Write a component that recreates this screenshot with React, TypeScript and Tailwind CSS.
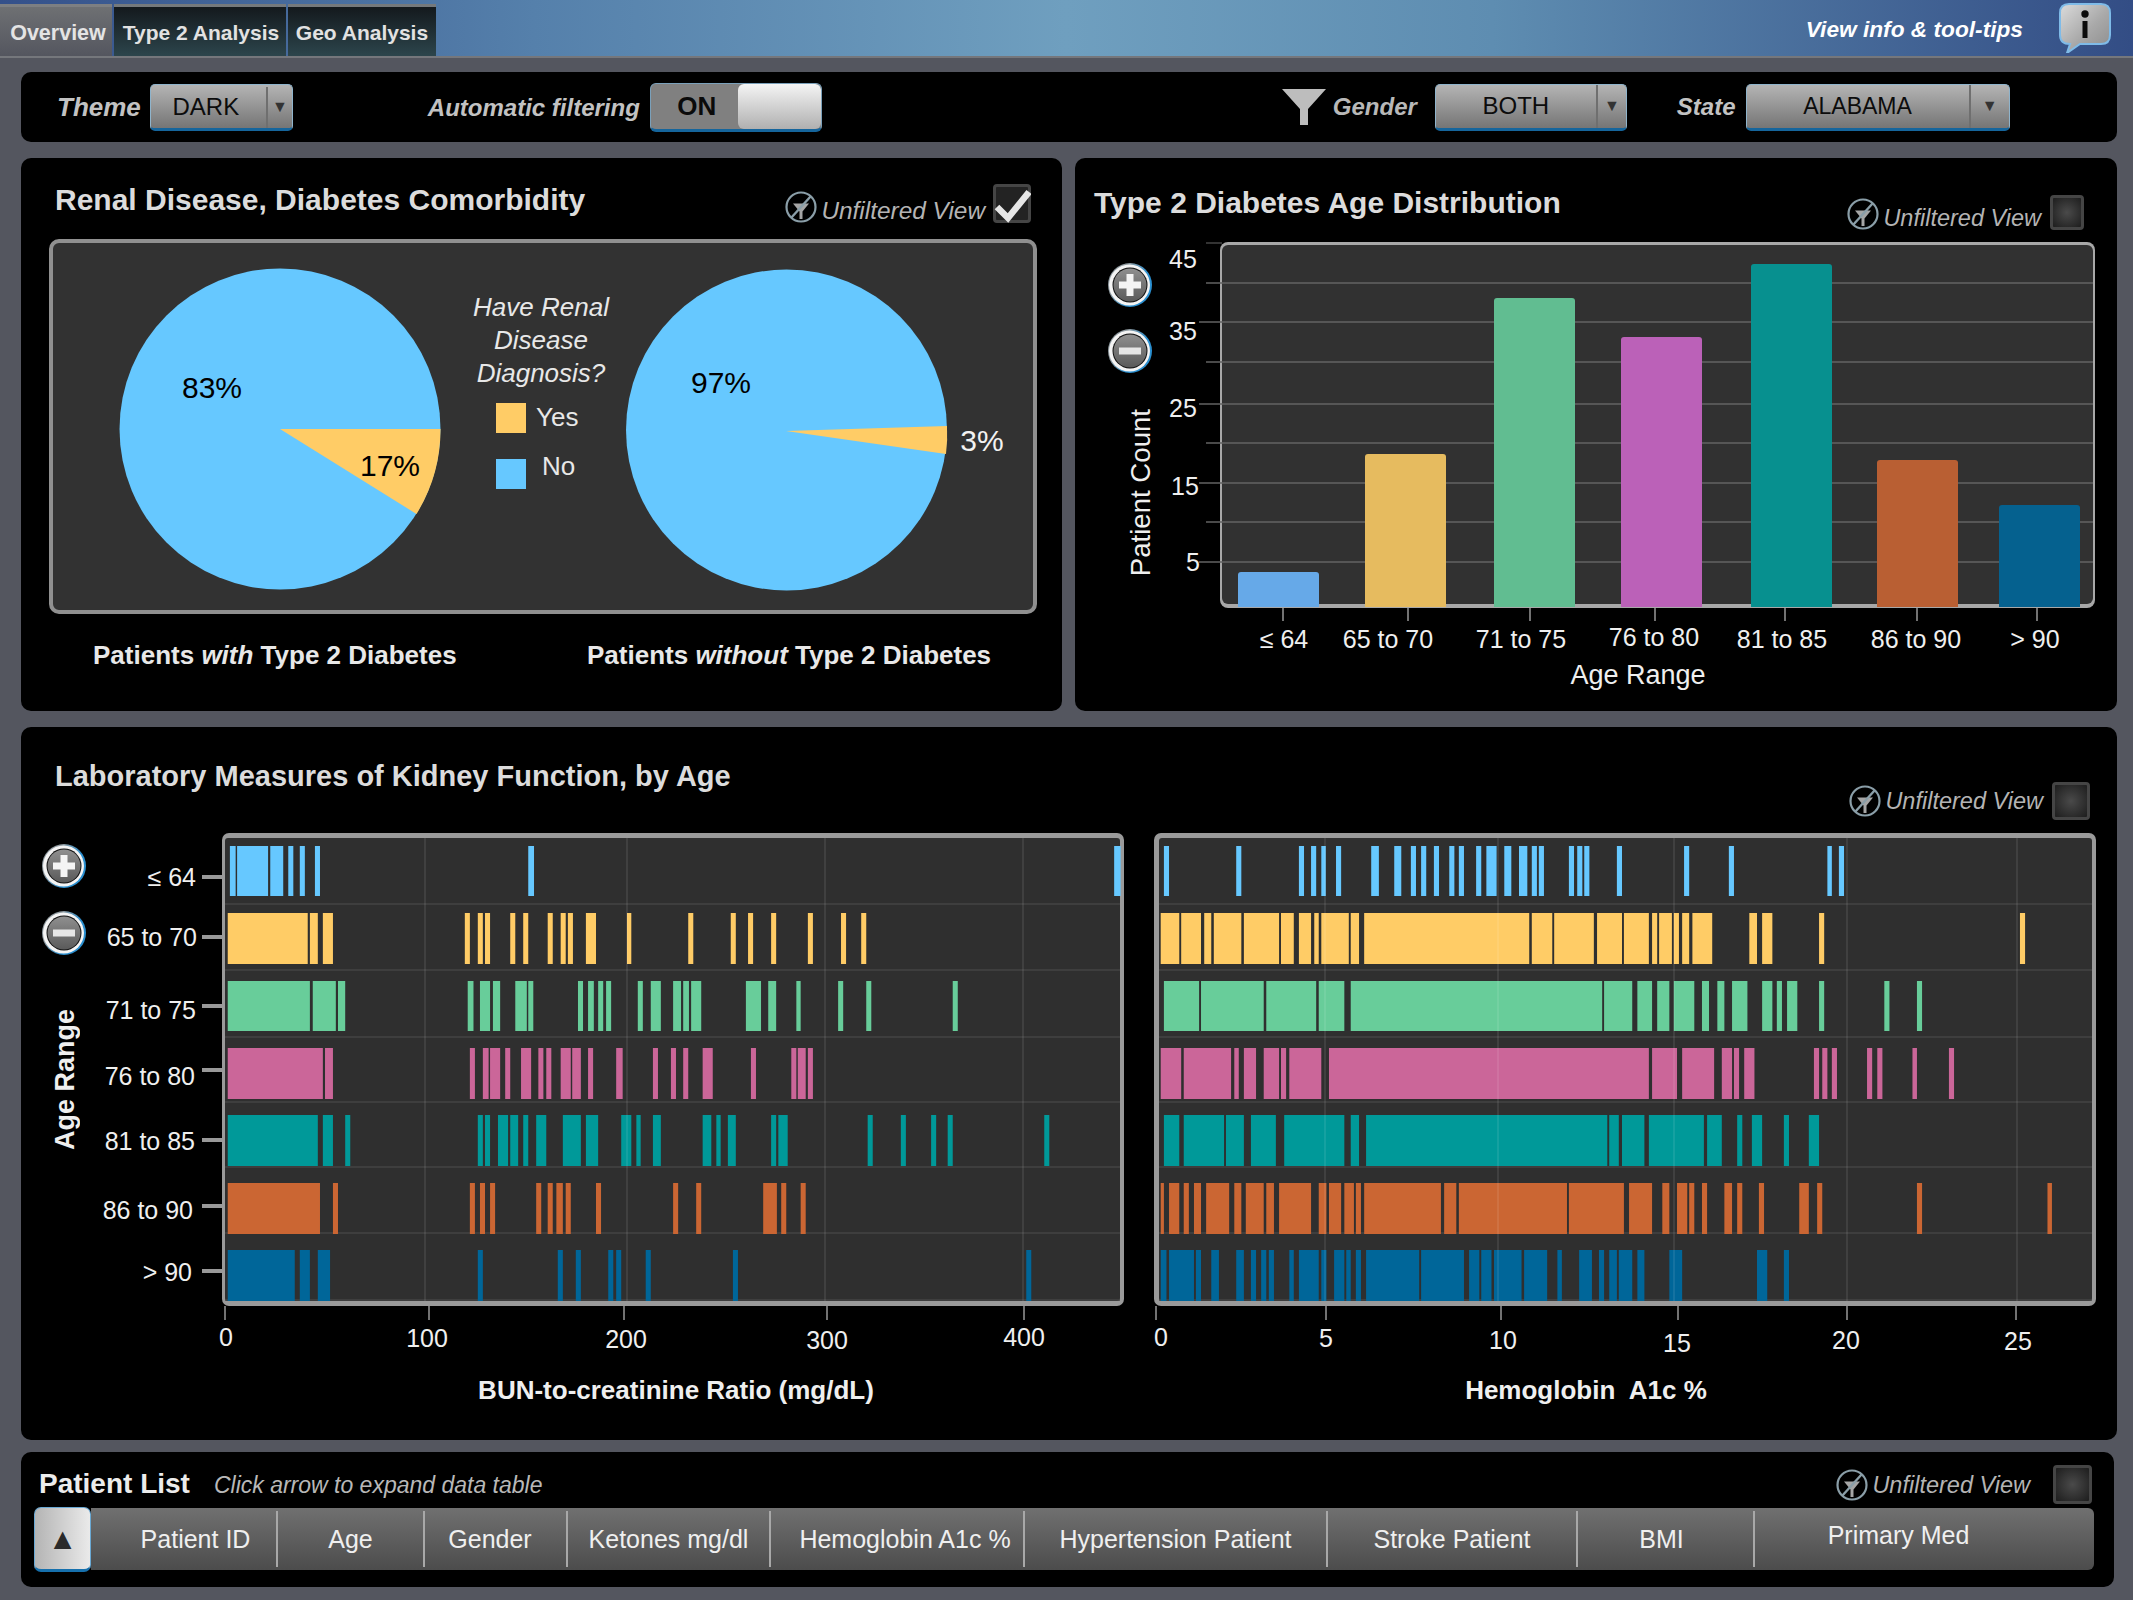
import type { ReactNode } from "react";

type Span = [number, number];

interface StripRow {
  color: string;
  top: number;
  height: number;
  spans: Span[];
}

// spans are read off the zoomed reference, so each plot carries its own scale
const LEFT_SCALE = 1.3876;
const RIGHT_SCALE = 1.563;
const PLOT_X = 1130;

const rowBands: { color: string; top: number; height: number }[] = [
  { color: "#66c8ff", top: 846, height: 50 },
  { color: "#ffcc66", top: 913, height: 51 },
  { color: "#68cd9a", top: 981, height: 50 },
  { color: "#cb6699", top: 1048, height: 51 },
  { color: "#009999", top: 1115, height: 51 },
  { color: "#cb6633", top: 1183, height: 51 },
  { color: "#006699", top: 1250, height: 51 },
];

const rowLines = [904, 970, 1037, 1102, 1167, 1233, 1300];

const bunSpans: Span[][] = [
  [[319, 327], [329, 372], [375, 393], [400, 407], [416, 423], [437, 444], [733, 741], [1546, 1555]],
  [[316, 427], [430, 441], [448, 462], [645, 652], [663, 670], [673, 680], [708, 715], [726, 733], [760, 767], [778, 785], [788, 795], [813, 827], [870, 876], [955, 962], [1014, 1021], [1038, 1045], [1070, 1077], [1121, 1128], [1167, 1174], [1195, 1202]],
  [[316, 430], [434, 466], [469, 479], [649, 657], [666, 680], [684, 694], [715, 731], [733, 740], [802, 809], [816, 824], [830, 837], [841, 848], [885, 892], [903, 917], [934, 945], [948, 956], [959, 973], [1035, 1056], [1066, 1077], [1105, 1111], [1163, 1170], [1202, 1209], [1322, 1329]],
  [[316, 448], [451, 462], [652, 659], [670, 678], [680, 694], [701, 708], [723, 737], [747, 754], [758, 765], [778, 792], [794, 806], [816, 823], [855, 864], [906, 913], [931, 938], [948, 955], [975, 989], [1042, 1049], [1098, 1105], [1107, 1118], [1121, 1128]],
  [[316, 441], [448, 462], [479, 486], [663, 670], [673, 680], [691, 705], [708, 719], [726, 733], [744, 758], [781, 806], [813, 830], [862, 876], [883, 889], [906, 917], [975, 987], [994, 1000], [1010, 1021], [1070, 1077], [1080, 1093], [1204, 1211], [1250, 1257], [1292, 1299], [1315, 1322], [1449, 1456]],
  [[316, 444], [462, 469], [652, 659], [666, 673], [680, 687], [744, 751], [760, 767], [772, 781], [785, 792], [827, 834], [934, 941], [966, 973], [1059, 1078], [1084, 1091], [1111, 1118]],
  [[316, 409], [416, 430], [441, 458], [663, 670], [774, 781], [799, 806], [844, 851], [855, 862], [896, 903], [1017, 1024], [1424, 1431]],
];

const a1cSpans: Span[][] = [
  [[53, 61], [166, 174], [264, 272], [283, 291], [299, 306], [322, 330], [377, 389], [413, 424], [439, 447], [455, 463], [475, 483], [499, 507], [514, 522], [541, 549], [557, 573], [585, 596], [608, 621], [628, 636], [639, 647], [686, 694], [699, 707], [710, 718], [761, 769], [866, 874], [936, 944], [1090, 1097], [1108, 1116]],
  [[48, 77], [80, 111], [116, 127], [131, 174], [178, 233], [236, 256], [264, 283], [288, 295], [299, 342], [345, 358], [366, 624], [628, 660], [663, 725], [730, 769], [772, 811], [816, 824], [827, 847], [850, 858], [863, 874], [879, 910], [968, 980], [988, 1004], [1077, 1085], [1391, 1399]],
  [[53, 108], [111, 209], [213, 291], [295, 335], [345, 738], [741, 785], [793, 816], [824, 843], [850, 882], [894, 905], [918, 929], [941, 965], [988, 1004], [1011, 1019], [1027, 1043], [1077, 1085], [1179, 1187], [1230, 1238]],
  [[48, 80], [84, 158], [163, 170], [178, 197], [209, 233], [236, 244], [249, 299], [311, 811], [816, 855], [863, 913], [925, 941], [944, 952], [960, 976], [1069, 1077], [1082, 1090], [1097, 1105], [1152, 1160], [1168, 1176], [1223, 1230], [1280, 1288]],
  [[53, 77], [84, 147], [150, 178], [189, 228], [241, 335], [345, 358], [369, 746], [749, 764], [769, 804], [811, 897], [902, 925], [949, 957], [972, 988], [1022, 1030], [1061, 1077]],
  [[48, 53], [61, 77], [84, 92], [100, 111], [119, 155], [163, 174], [181, 209], [213, 225], [233, 283], [295, 307], [311, 330], [335, 350], [353, 361], [366, 486], [491, 510], [514, 683], [686, 772], [780, 816], [832, 843], [855, 871], [874, 882], [894, 902], [929, 941], [949, 957], [983, 991], [1046, 1061], [1074, 1082], [1230, 1238], [1434, 1441]],
  [[48, 57], [61, 100], [103, 111], [127, 139], [166, 178], [189, 197], [205, 213], [217, 225], [249, 256], [264, 295], [299, 307], [319, 335], [338, 345], [353, 361], [369, 452], [455, 522], [530, 546], [549, 565], [569, 612], [616, 652], [668, 675], [702, 722], [733, 741], [749, 761], [764, 785], [793, 804], [843, 863], [980, 996], [1022, 1030]],
];

const bunRows: StripRow[] = rowBands.map((band, i) => ({ ...band, spans: bunSpans[i] }));
const a1cRows: StripRow[] = rowBands.map((band, i) => ({ ...band, spans: a1cSpans[i] }));

const stripAgeLabels = [
  { label: "≤ 64", right: 196, textY: 877, tickY: 877 },
  { label: "65 to 70", right: 197, textY: 937, tickY: 937 },
  { label: "71 to 75", right: 196, textY: 1010, tickY: 1006 },
  { label: "76 to 80", right: 195, textY: 1076, tickY: 1070 },
  { label: "81 to 85", right: 195, textY: 1141, tickY: 1140 },
  { label: "86 to 90", right: 193, textY: 1210, tickY: 1206 },
  { label: "> 90", right: 192, textY: 1272, tickY: 1271 },
];

const ageBars = [
  { x: 1238, top: 572, color: "#66a9e8", tick: 1283, label: "≤ 64", labelX: 1284, labelY: 639 },
  { x: 1365, top: 454, color: "#e6bb5f", tick: 1408, label: "65 to 70", labelX: 1388, labelY: 639 },
  { x: 1494, top: 298, color: "#61bd91", tick: 1530, label: "71 to 75", labelX: 1521, labelY: 639 },
  { x: 1621, top: 337, color: "#bb61b8", tick: 1655, label: "76 to 80", labelX: 1654, labelY: 637 },
  { x: 1751, top: 264, color: "#07908f", tick: 1785, label: "81 to 85", labelX: 1782, labelY: 639 },
  { x: 1877, top: 460, color: "#b95f33", tick: 1917, label: "86 to 90", labelX: 1916, labelY: 639 },
  { x: 1999, top: 505, color: "#05618f", tick: 2037, label: "> 90", labelX: 2035, labelY: 639 },
];

const patientColumns = [
  { label: "Patient ID", width: 187, inset: "pl-[24px]" },
  { label: "Age", width: 147, inset: "" },
  { label: "Gender", width: 143, inset: "pr-[11px]" },
  { label: "Ketones mg/dl", width: 203, inset: "" },
  { label: "Hemoglobin A1c %", width: 254, inset: "pl-[16px]" },
  { label: "Hypertension Patient", width: 303, inset: "" },
  { label: "Stroke Patient", width: 250, inset: "" },
  { label: "BMI", width: 177, inset: "pr-[8px]" },
];

function FilterBadge() {
  return (
    <svg width="32" height="32" viewBox="0 0 32 32" className="shrink-0">
      <circle cx="16" cy="16" r="14.5" fill="none" stroke="#8a9ea8" strokeWidth="2.2" />
      <path d="M8 12.5h16l-6.5 8V28h-3v-7.5z" fill="#a5a5a5" />
      <path d="M6 27L26 5" stroke="#8a9ea8" strokeWidth="2.4" />
    </svg>
  );
}

function CheckBox({ checked = false, size = "w-[38px] h-[39px]" }: { checked?: boolean; size?: string }) {
  return (
    <div
      className={`relative shrink-0 rounded-[4px] border-[3px] border-[#454545] ${
        checked ? "bg-[#232323]" : "bg-[radial-gradient(circle,#4a4a4a,#1d1d1d)]"
      } ${size}`}
    >
      {checked ? (
        <svg viewBox="0 0 38 39" className="absolute -left-[3px] -top-[3px] h-[39px] w-[38px]">
          <path d="M4 23l11 11L36 8" fill="none" stroke="#e6e6e6" strokeWidth="6.5" />
        </svg>
      ) : null}
    </div>
  );
}

function UnfilteredView({
  checked,
  boxSize,
  gap = "ml-[8px]",
  textSize = "text-[23.5px]",
  className = "",
}: {
  checked?: boolean;
  boxSize?: string;
  gap?: string;
  textSize?: string;
  className?: string;
}) {
  return (
    <div className={`flex self-start ${className}`}>
      <FilterBadge />
      <span className={`ml-[4px] italic leading-[24px] text-[#b4b4b4] ${textSize}`}>Unfiltered View</span>
      <div className={gap}>
        <CheckBox checked={checked} size={boxSize} />
      </div>
    </div>
  );
}

function ZoomButton({ kind }: { kind: "plus" | "minus" }) {
  return (
    <button type="button" className="block h-[46px] w-[46px]">
      <svg width="46" height="46" viewBox="0 0 46 46">
        <defs>
          <linearGradient id="zoomFace" x1="0" y1="0" x2="0" y2="1">
            <stop offset="0" stopColor="#8f8f8f" />
            <stop offset="1" stopColor="#5a5a5a" />
          </linearGradient>
          <linearGradient id="zoomEdge" x1="0" y1="0" x2="1" y2="0.6">
            <stop offset="0.35" stopColor="#8f9aa0" />
            <stop offset="0.75" stopColor="#2a8fd0" />
          </linearGradient>
        </defs>
        <circle cx="23" cy="23" r="22" fill="url(#zoomEdge)" />
        <circle cx="22.5" cy="23" r="20.5" fill="#f4f4f4" />
        <circle cx="23" cy="23" r="17.5" fill="#111" />
        <circle cx="23" cy="23" r="16.5" fill="url(#zoomFace)" />
        {kind === "plus" ? <path d="M19.5 12h7v7.5H34v7h-7.5V34h-7v-7.5H12v-7h7.5z" fill="#f4f4f4" /> : <rect x="12" y="19.5" width="22" height="7" fill="#e6e6e6" />}
      </svg>
    </button>
  );
}

function Dropdown({
  label,
  className,
  arrowWidth,
  textClass = "text-[24px]",
}: {
  label: string;
  className: string;
  arrowWidth: string;
  textClass?: string;
}) {
  return (
    <div
      className={`flex overflow-hidden rounded-[5px] border border-[#8fb4cc] border-b-[3px] border-b-[#15659c] bg-[linear-gradient(#b4b4b4,#757575)] ${className}`}
    >
      <div className={`flex flex-1 items-center justify-center text-[#0c0c0c] ${textClass}`}>{label}</div>
      <div className={`flex items-center justify-center border-l-2 border-l-[#6f6f6f] text-[16px] text-[#333] ${arrowWidth}`}>
        ▼
      </div>
    </div>
  );
}

function PlotLabel({
  x,
  y,
  children,
  anchor = "middle",
  size = 25,
  bold = false,
}: {
  x: number;
  y: number;
  children: ReactNode;
  anchor?: "start" | "middle" | "end";
  size?: number;
  bold?: boolean;
}) {
  return (
    <text
      x={x}
      y={y}
      textAnchor={anchor}
      dominantBaseline="central"
      fontSize={size}
      fontWeight={bold ? 700 : 400}
      fill="#efefef"
    >
      {children}
    </text>
  );
}

function StripFrame({
  left,
  right,
  innerLeft,
  innerRight,
}: {
  left: number;
  right: number;
  innerLeft: number;
  innerRight: number;
}) {
  return (
    <>
      <rect x={left} y={833} width={right - left} height={473} rx={7} fill="#9a9a9a" />
      <rect x={innerLeft} y={838} width={innerRight - innerLeft} height={463} rx={3} fill="#2f2f2f" />
      {rowLines.map((y) => (
        <line key={y} x1={innerLeft} x2={innerRight} y1={y} y2={y} stroke="#444444" strokeWidth="1.5" />
      ))}
    </>
  );
}

// vertical grid sits on top of the bars, faintly
function StripGrid({ grid }: { grid: number[] }) {
  return (
    <>
      {grid.map((x) => (
        <line key={x} x1={x} x2={x} y1={838} y2={1301} stroke="#ffffff" strokeOpacity="0.17" strokeWidth="1" />
      ))}
    </>
  );
}

function BunPlot() {
  const ticks = [
    { x: 225, label: "0", labelX: 226, labelY: 1337 },
    { x: 429, label: "100", labelX: 427, labelY: 1338 },
    { x: 624, label: "200", labelX: 626, labelY: 1339 },
    { x: 827, label: "300", labelX: 827, labelY: 1340 },
    { x: 1024, label: "400", labelX: 1024, labelY: 1337 },
  ];
  return (
    <svg width="1050" height="590" viewBox="90 825 1050 590" className="shrink-0">
      <StripFrame left={222} right={1124} innerLeft={225} innerRight={1120} />
      {bunRows.map((row) =>
        row.spans.map(([a, b]) => (
          <rect
            key={`${row.top}-${a}`}
            x={a / LEFT_SCALE}
            y={row.top}
            width={(b - a) / LEFT_SCALE}
            height={row.height}
            fill={row.color}
          />
        )),
      )}
      <StripGrid grid={[425, 627, 825, 1023]} />
      {stripAgeLabels.map((item) => (
        <g key={item.label}>
          <PlotLabel x={item.right} y={item.textY} anchor="end">
            {item.label}
          </PlotLabel>
          <line x1={202} x2={222} y1={item.tickY} y2={item.tickY} stroke="#999999" strokeWidth="4" />
        </g>
      ))}
      {ticks.map((tick) => (
        <g key={tick.label}>
          <line x1={tick.x} x2={tick.x} y1={1306} y2={1320} stroke="#999999" strokeWidth="1.5" />
          <PlotLabel x={tick.labelX} y={tick.labelY}>
            {tick.label}
          </PlotLabel>
        </g>
      ))}
      <PlotLabel x={676} y={1390} size={26} bold>
        BUN-to-creatinine Ratio (mg/dL)
      </PlotLabel>
    </svg>
  );
}

function A1cPlot() {
  const ticks = [
    { x: 1156, label: "0", labelX: 1161, labelY: 1337 },
    { x: 1326, label: "5", labelX: 1326, labelY: 1338 },
    { x: 1501, label: "10", labelX: 1503, labelY: 1340 },
    { x: 1678, label: "15", labelX: 1677, labelY: 1343 },
    { x: 1847, label: "20", labelX: 1846, labelY: 1340 },
    { x: 2016, label: "25", labelX: 2018, labelY: 1341 },
  ];
  return (
    <svg width="970" height="590" viewBox="1140 825 970 590" className="shrink-0">
      <StripFrame left={1154} right={2096} innerLeft={1159} innerRight={2092} />
      {a1cRows.map((row) =>
        row.spans.map(([a, b]) => (
          <rect
            key={`${row.top}-${a}`}
            x={PLOT_X + a / RIGHT_SCALE}
            y={row.top}
            width={(b - a) / RIGHT_SCALE}
            height={row.height}
            fill={row.color}
          />
        )),
      )}
      <StripGrid grid={[1325, 1498, 1674, 1847, 2017]} />
      {ticks.map((tick) => (
        <g key={tick.label}>
          <line x1={tick.x} x2={tick.x} y1={1306} y2={1320} stroke="#999999" strokeWidth="1.5" />
          <PlotLabel x={tick.labelX} y={tick.labelY}>
            {tick.label}
          </PlotLabel>
        </g>
      ))}
      <text
        x={1586}
        y={1390}
        textAnchor="middle"
        dominantBaseline="central"
        fontSize={26}
        fontWeight={700}
        fill="#efefef"
        xmlSpace="preserve"
      >
        Hemoglobin  A1c %
      </text>
    </svg>
  );
}

function AgeBarChart() {
  const gridLines = [
    { y: 283, from: 1206 },
    { y: 322, from: 1199 },
    { y: 362, from: 1206 },
    { y: 404, from: 1199 },
    { y: 443, from: 1206 },
    { y: 483, from: 1199 },
    { y: 522, from: 1206 },
    { y: 562, from: 1199 },
  ];
  const valueLabels = [
    { label: "45", x: 1183, y: 259 },
    { label: "35", x: 1183, y: 331 },
    { label: "25", x: 1183, y: 408 },
    { label: "15", x: 1185, y: 486 },
    { label: "5", x: 1193, y: 562 },
  ];
  return (
    <svg width="950" height="460" viewBox="1160 235 950 460" className="shrink-0">
      <rect x={1220} y={242} width={875} height={366} rx={8} fill="#a8a8a8" />
      <rect x={1222} y={245} width={871} height={359} rx={6} fill="#313131" />
      <line x1={1206} x2={1222} y1={243} y2={243} stroke="#666666" strokeWidth="1" />
      {gridLines.map((line) => (
        <line key={line.y} x1={line.from} x2={2093} y1={line.y} y2={line.y} stroke="#636363" strokeWidth="1.5" />
      ))}
      {ageBars.map((bar) => (
        <g key={bar.label}>
          <path
            d={`M${bar.x} 607V${bar.top + 3}q0-3 3-3h75q3 0 3 3V607q0 0-3 0h-75q-3 0-3 0z`}
            fill={bar.color}
          />
          <line x1={bar.tick} x2={bar.tick} y1={608} y2={621} stroke="#999999" strokeWidth="1.5" />
          <PlotLabel x={bar.labelX} y={bar.labelY}>
            {bar.label}
          </PlotLabel>
        </g>
      ))}
      {valueLabels.map((item) => (
        <PlotLabel key={item.label} x={item.x} y={item.y}>
          {item.label}
        </PlotLabel>
      ))}
      <PlotLabel x={1638} y={675} size={27}>
        Age Range
      </PlotLabel>
    </svg>
  );
}

function PieWith() {
  return (
    <svg width="417" height="367" viewBox="53 243 417 367" className="shrink-0">
      <circle cx={280} cy={429} r={160.5} fill="#66c8ff" />
      <path d="M280 429H440.5A160.5 160.5 0 0 1 416.5 514z" fill="#ffcc66" />
      <text x={212} y={387} textAnchor="middle" dominantBaseline="central" fontSize={30} fill="#000">
        83%
      </text>
      <text x={390} y={465} textAnchor="middle" dominantBaseline="central" fontSize={30} fill="#000">
        17%
      </text>
    </svg>
  );
}

function PieWithout() {
  return (
    <svg width="413" height="367" viewBox="620 243 413 367" className="shrink-0">
      <circle cx={786.5} cy={430} r={160.5} fill="#66c8ff" />
      <path d="M786 431L947 426A160.5 160.5 0 0 1 946 454z" fill="#ffcc66" />
      <text x={721} y={382} textAnchor="middle" dominantBaseline="central" fontSize={30} fill="#000">
        97%
      </text>
      <text x={982} y={440} textAnchor="middle" dominantBaseline="central" fontSize={30} fill="#f2f2f2">
        3%
      </text>
    </svg>
  );
}

function InfoBubble() {
  return (
    <svg width="52" height="50" viewBox="0 0 52 50" className="shrink-0">
      <defs>
        <linearGradient id="infoFill" x1="0" y1="0" x2="1" y2="1">
          <stop offset="0" stopColor="#dcdcdc" />
          <stop offset="0.55" stopColor="#a9a9a9" />
          <stop offset="1" stopColor="#8c8c8c" />
        </linearGradient>
      </defs>
      <path
        d="M10 1h32q9 0 9 9v22q0 9-9 9H21L8 50l3-9q-10 0-10-9V10q0-9 9-9z"
        fill="url(#infoFill)"
        stroke="#7fbbe8"
        strokeWidth="2"
      />
      <circle cx="26" cy="11" r="3.7" fill="#0c0c0c" />
      <rect x="23.5" y="18" width="5" height="17" fill="#0c0c0c" />
    </svg>
  );
}

function HeaderTab({ children, active = false, className }: { children: ReactNode; active?: boolean; className: string }) {
  return (
    <div
      className={`flex h-[52px] items-center justify-center border-t-[3px] pt-[3px] font-bold ${
        active
          ? "border-t-[#7d7f82] bg-[linear-gradient(#6e7073,#54565f)] text-[#e4e4e4]"
          : "border-t-[#75797c] bg-[linear-gradient(#14191d,#2c454c)] text-[#e2e2e2]"
      } ${className}`}
    >
      {children}
    </div>
  );
}

export default function App() {
  return (
    <div className="h-[1600px] w-[2133px] overflow-hidden bg-[#54565f] font-['Liberation_Sans',Arial,sans-serif]">
      <header className="flex h-[58px] items-end justify-between border-b-2 border-b-[#75777c] bg-[linear-gradient(90deg,#34508a_0%,#5580ab_25%,#6f9fbf_50%,#5e8db1_70%,#334d85_100%)]">
        <div className="flex gap-[2px]">
          <HeaderTab active className="w-[112px] pl-[4px] text-[21.5px]">
            Overview
          </HeaderTab>
          <HeaderTab className="w-[172px] pl-[2px] text-[21px]">Type 2 Analysis</HeaderTab>
          <HeaderTab className="w-[148px] text-[21px]">Geo Analysis</HeaderTab>
        </div>
        <div className="mb-[2px] mr-[22px] flex items-start self-start pt-[3px]">
          <span className="mr-[36px] mt-[12px] text-[22.7px] font-bold italic leading-[28px] text-white">View info &amp; tool-tips</span>
          <InfoBubble />
        </div>
      </header>

      <section className="ml-[21px] mr-[16px] mt-[14px] flex h-[70px] items-center rounded-[10px] bg-black">
        <span className="ml-[36px] text-[26px] font-bold italic text-[#c2c2c2]">Theme</span>
        <Dropdown label="DARK" className="ml-[9px] h-[47px] w-[143px] pt-[2px]" arrowWidth="w-[26px]" textClass="pr-[5px] text-[24px]" />
        <span className="ml-[135px] pt-[2px] text-[24px] font-bold italic text-[#c2c2c2]">Automatic filtering</span>
        <div className="ml-[10px] flex h-[49px] w-[172px] overflow-hidden rounded-[6px] border border-[#7aa0ba] border-b-[3px] border-b-[#15659c] bg-[#808080]">
          <div className="flex w-[87px] items-center justify-center pl-[5px] text-[26px] font-bold text-[#0a0a0a]">ON</div>
          <div className="flex-1 rounded-[6px] bg-[linear-gradient(#f4f4f4,#b0b0b0)]" />
        </div>
        <svg width="44" height="36" viewBox="0 0 44 36" className="ml-[460px] shrink-0">
          <path d="M0 0h44L26 20v16h-8V20z" fill="#bdbdbd" />
        </svg>
        <span className="ml-[7px] text-[24px] font-bold italic text-[#b8b8b8]">Gender</span>
        <Dropdown label="BOTH" className="ml-[18px] h-[47px] w-[192px]" arrowWidth="w-[30px]" />
        <span className="ml-[50px] text-[24px] font-bold italic text-[#c2c2c2]">State</span>
        <Dropdown label="ALABAMA" className="ml-[10px] h-[47px] w-[264px]" arrowWidth="w-[40px]" textClass="text-[23px]" />
      </section>

      <div className="ml-[21px] mr-[16px] mt-[16px] flex gap-[13px]">
        <section className="h-[553px] w-[1041px] rounded-[10px] bg-black">
          <div className="flex h-[81px] justify-between pl-[34px] pr-[31px]">
            <h2 className="mt-[25px] text-[30px] font-bold leading-[34px] text-[#dcdcdc]">Renal Disease, Diabetes Comorbidity</h2>
            <UnfilteredView checked textSize="text-[24.4px]" className="mt-[26px] h-[39px] items-end" />
          </div>
          <div className="ml-[28px] mr-[25px] flex h-[375px] rounded-[10px] border-4 border-[#909090] bg-[#323232]">
            <PieWith />
            <div className="-ml-[4px] w-[154px] shrink-0 pr-[4px] pt-[48px] text-[26px] italic leading-[33px] text-[#e8e8e8]">
              <div className="text-center">Have Renal</div>
              <div className="text-center">Disease</div>
              <div className="text-center">Diagnosis?</div>
              <div className="ml-[30px] mt-[11px] flex items-center not-italic">
                <div className="h-[30px] w-[30px] bg-[#ffcc66]" />
                <span className="ml-[10px]">Yes</span>
              </div>
              <div className="ml-[30px] mt-[23px] flex items-center not-italic">
                <div className="h-[30px] w-[30px] bg-[#66c8ff]" />
                <span className="relative -top-[7px] ml-[16px]">No</span>
              </div>
            </div>
            <PieWithout />
          </div>
          <div className="mt-[26px] flex text-[26px] font-bold leading-[30px] text-[#e8e8e8]">
            <div className="ml-[72px] w-[494px]">
              Patients <em>with</em> Type 2 Diabetes
            </div>
            <div>
              Patients <em>without</em> Type 2 Diabetes
            </div>
          </div>
        </section>

        <section className="h-[553px] flex-1 rounded-[10px] bg-black">
          <div className="flex h-[77px] justify-between pl-[19px] pr-[33px]">
            <h2 className="mt-[28px] text-[30px] font-bold leading-[34px] text-[#dcdcdc]">Type 2 Diabetes Age Distribution</h2>
            <UnfilteredView boxSize="w-[34px] h-[35px]" gap="ml-[9px]" className="mt-[36px] h-[36px] items-end" />
          </div>
          <div className="flex">
            <div className="ml-[32px] flex w-[46px] flex-col items-center pt-[27px]">
              <ZoomButton kind="plus" />
              <div className="mt-[20px]">
                <ZoomButton kind="minus" />
              </div>
              <span className="mt-[35px] rotate-180 self-end text-[27.6px] leading-[24px] text-[#efefef] [writing-mode:vertical-rl]">
                Patient Count
              </span>
            </div>
            <div className="ml-[7px]">
              <AgeBarChart />
            </div>
          </div>
        </section>
      </div>

      <section className="ml-[21px] mr-[16px] mt-[16px] h-[713px] rounded-[10px] bg-black">
        <div className="flex h-[98px] justify-between pl-[34px] pr-[27px]">
          <h2 className="mt-[32px] text-[29px] font-bold leading-[34px] text-[#dcdcdc]">
            Laboratory Measures of Kidney Function, by Age
          </h2>
          <UnfilteredView boxSize="w-[38px] h-[38px]" gap="ml-[9px]" className="mt-[55px] h-[38px] items-center" />
        </div>
        <div className="flex">
          <div className="ml-[20px] flex w-[46px] flex-col items-center pt-[18px]">
            <ZoomButton kind="plus" />
            <div className="mt-[21px]">
              <ZoomButton kind="minus" />
            </div>
            <span className="ml-[2px] mt-[53px] rotate-180 text-[27px] font-bold leading-[30px] text-[#efefef] [writing-mode:vertical-rl]">
              Age Range
            </span>
          </div>
          <div className="ml-[3px] flex">
            <BunPlot />
            <A1cPlot />
          </div>
        </div>
      </section>

      <section className="ml-[21px] mr-[19px] mt-[12px] h-[135px] rounded-[10px] bg-black">
        <div className="flex h-[56px] items-start justify-between pl-[18px] pr-[22px]">
          <div className="mt-[15px] flex items-baseline">
            <span className="text-[28px] font-bold leading-[34px] text-[#ececec]">Patient List</span>
            <span className="ml-[24px] text-[23px] italic leading-[34px] text-[#b8b8b8]">Click arrow to expand data table</span>
          </div>
          <UnfilteredView boxSize="w-[39px] h-[39px]" gap="ml-[23px]" className="mt-[13px] h-[39px] items-center" />
        </div>
        <div className="ml-[13px] flex">
          <button
            type="button"
            className="z-10 -mt-px flex h-[65px] w-[57px] items-center justify-center rounded-[7px] border border-[#6aa9d4] border-b-[3px] border-b-[#1670ad] bg-[linear-gradient(90deg,#b4b4b4,#eaeaea)] text-[30px] text-[#2a2a2a]"
          >
            ▲
          </button>
          <div className="flex h-[62px] w-[2003px] items-center rounded-r-[6px] bg-[linear-gradient(#707070,#4c4c4c)] text-[25px] text-[#efefef]">
            {patientColumns.map((col) => (
              <div
                key={col.label}
                style={{ width: col.width }}
                className={`flex h-[56px] shrink-0 items-center justify-center border-r-2 border-r-[#a8a8a8] pt-[2px] ${col.inset}`}
              >
                {col.label}
              </div>
            ))}
            <div className="flex-1 pb-[6px] pr-[52px] text-center">Primary Med</div>
          </div>
        </div>
      </section>
    </div>
  );
}
